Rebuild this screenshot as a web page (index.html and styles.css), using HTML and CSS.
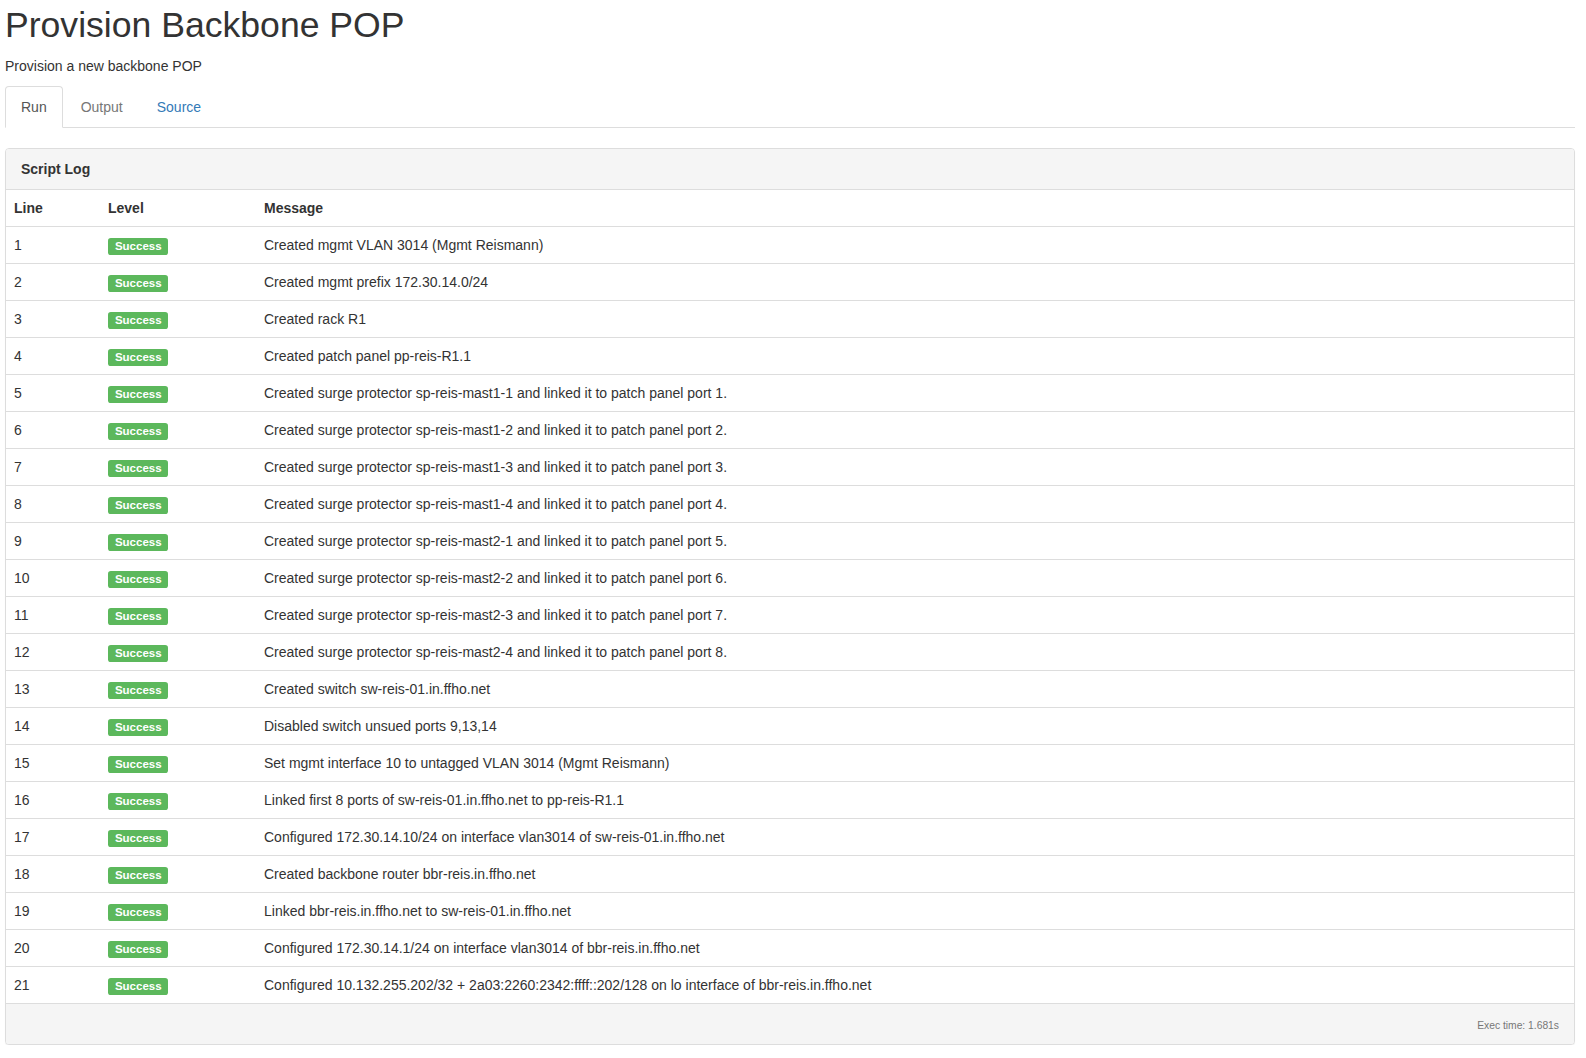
FILE: index.html
```html
<!DOCTYPE html>
<html lang="en">
<head>
<meta charset="utf-8">
<title>Provision Backbone POP</title>
<link rel="stylesheet" href="styles.css">
</head>
<body>
<div class="page">
  <h1 class="title">Provision Backbone POP</h1>
  <p class="subtitle">Provision a new backbone POP</p>
  <ul class="tabs">
    <li class="tab active"><a>Run</a></li>
    <li class="tab muted"><a>Output</a></li>
    <li class="tab"><a>Source</a></li>
  </ul>
  <div class="panel">
    <div class="panel-heading">Script Log</div>
    <table class="log">
      <colgroup><col class="c-line"><col class="c-level"><col></colgroup>
      <thead>
        <tr><th>Line</th><th>Level</th><th>Message</th></tr>
      </thead>
      <tbody>
        <tr><td>1</td><td><span class="label">Success</span></td><td>Created mgmt VLAN 3014 (Mgmt Reismann)</td></tr>
        <tr><td>2</td><td><span class="label">Success</span></td><td>Created mgmt prefix 172.30.14.0/24</td></tr>
        <tr><td>3</td><td><span class="label">Success</span></td><td>Created rack R1</td></tr>
        <tr><td>4</td><td><span class="label">Success</span></td><td>Created patch panel pp-reis-R1.1</td></tr>
        <tr><td>5</td><td><span class="label">Success</span></td><td>Created surge protector sp-reis-mast1-1 and linked it to patch panel port 1.</td></tr>
        <tr><td>6</td><td><span class="label">Success</span></td><td>Created surge protector sp-reis-mast1-2 and linked it to patch panel port 2.</td></tr>
        <tr><td>7</td><td><span class="label">Success</span></td><td>Created surge protector sp-reis-mast1-3 and linked it to patch panel port 3.</td></tr>
        <tr><td>8</td><td><span class="label">Success</span></td><td>Created surge protector sp-reis-mast1-4 and linked it to patch panel port 4.</td></tr>
        <tr><td>9</td><td><span class="label">Success</span></td><td>Created surge protector sp-reis-mast2-1 and linked it to patch panel port 5.</td></tr>
        <tr><td>10</td><td><span class="label">Success</span></td><td>Created surge protector sp-reis-mast2-2 and linked it to patch panel port 6.</td></tr>
        <tr><td>11</td><td><span class="label">Success</span></td><td>Created surge protector sp-reis-mast2-3 and linked it to patch panel port 7.</td></tr>
        <tr><td>12</td><td><span class="label">Success</span></td><td>Created surge protector sp-reis-mast2-4 and linked it to patch panel port 8.</td></tr>
        <tr><td>13</td><td><span class="label">Success</span></td><td>Created switch sw-reis-01.in.ffho.net</td></tr>
        <tr><td>14</td><td><span class="label">Success</span></td><td>Disabled switch unsued ports 9,13,14</td></tr>
        <tr><td>15</td><td><span class="label">Success</span></td><td>Set mgmt interface 10 to untagged VLAN 3014 (Mgmt Reismann)</td></tr>
        <tr><td>16</td><td><span class="label">Success</span></td><td>Linked first 8 ports of sw-reis-01.in.ffho.net to pp-reis-R1.1</td></tr>
        <tr><td>17</td><td><span class="label">Success</span></td><td>Configured 172.30.14.10/24 on interface vlan3014 of sw-reis-01.in.ffho.net</td></tr>
        <tr><td>18</td><td><span class="label">Success</span></td><td>Created backbone router bbr-reis.in.ffho.net</td></tr>
        <tr><td>19</td><td><span class="label">Success</span></td><td>Linked bbr-reis.in.ffho.net to sw-reis-01.in.ffho.net</td></tr>
        <tr><td>20</td><td><span class="label">Success</span></td><td>Configured 172.30.14.1/24 on interface vlan3014 of bbr-reis.in.ffho.net</td></tr>
        <tr><td>21</td><td><span class="label">Success</span></td><td>Configured 10.132.255.202/32 + 2a03:2260:2342:ffff::202/128 on lo interface of bbr-reis.in.ffho.net</td></tr>
      </tbody>
    </table>
    <div class="panel-footer"><small class="exec">Exec time: 1.681s</small></div>
  </div>
</div>
</body>
</html>
```

FILE: styles.css
```css
* { box-sizing: border-box; }
html, body { margin: 0; padding: 0; background: #fff; }
body {
  font-family: "Liberation Sans", Arial, Helvetica, sans-serif;
  font-size: 14px;
  line-height: 20px;
  color: #333;
  overflow: hidden;
}
.page { padding: 5px 11px 0 5px; }

.title {
  margin: 0 0 11px;
  font-size: 35.6px;
  font-weight: 500;
  line-height: 40px;
  color: #333;
}
.subtitle { margin: 0 0 10px; }

.tabs {
  list-style: none;
  margin: 0;
  padding: 0;
  display: flex;
  border-bottom: 1px solid #ddd;
}
.tab { margin-bottom: -1px; }
.tab a {
  display: block;
  padding: 10px 15px;
  line-height: 20px;
  margin-right: 2px;
  border: 1px solid transparent;
  border-radius: 4px 4px 0 0;
  color: #337ab7;
  cursor: pointer;
}
.tab.muted a { color: #777; }
.tab.active a {
  color: #555;
  background: #fff;
  border-color: #ddd #ddd transparent;
}

.panel {
  margin-top: 20px;
  border: 1px solid #ddd;
  border-radius: 4px;
  box-shadow: 0 1px 1px rgba(0,0,0,.05);
  background: #fff;
  overflow: hidden;
}
.panel-heading {
  padding: 10px 15px;
  background: #f5f5f5;
  border-bottom: 1px solid #ddd;
  font-weight: bold;
}
.log {
  width: 100%;
  border-collapse: collapse;
}
.c-line { width: 94px; }
.c-level { width: 156px; }
.log th, .log td {
  padding: 8px;
  line-height: 20px;
  text-align: left;
  vertical-align: top;
  border-bottom: 1px solid #ddd;
}
.log th { font-weight: bold; }
.log tbody tr:last-child td { border-bottom: 0; }

.label {
  display: inline;
  padding: .2em .6em .3em;
  font-size: 11.5px;
  font-weight: bold;
  line-height: 1;
  color: #fff;
  background: #5cb85c;
  border-radius: .25em;
  white-space: nowrap;
  vertical-align: baseline;
}

.panel-footer {
  height: 41px;
  padding: 10px 15px;
  background: #f5f5f5;
  border-top: 1px solid #ddd;
  text-align: right;
  line-height: 20px;
}
.exec {
  font-size: 10.3px;
  line-height: 1;
  color: #777;
}
```
